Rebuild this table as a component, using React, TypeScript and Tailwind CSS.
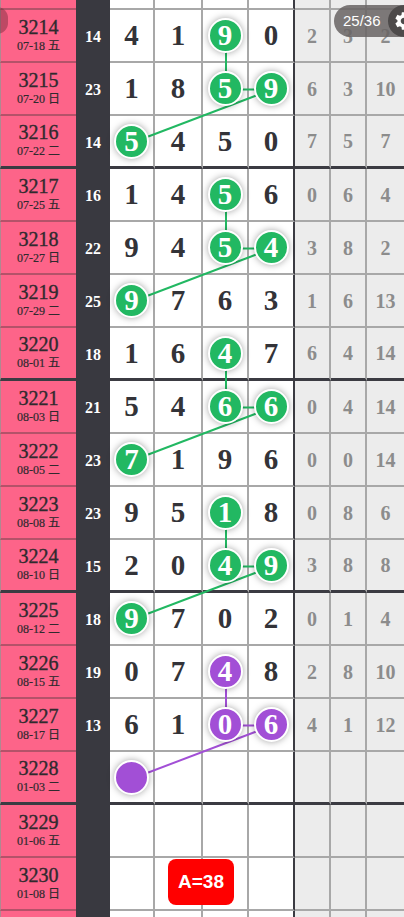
import * as React from "react"

// Lottery trend sheet — one row per draw, 53px tall, grid lines every row, dark rule every 4 rows.

type Row = {
  no: string
  date: string
  sum?: number
  digits: (number | null)[]
  balls: number[]
  tone?: "green" | "purple"
  miss: (number | null)[]
}

const rows: Row[] = [
  { no: "3213", date: "07-15 二", sum: 17, digits: [6, 3, 2, 1], balls: [], miss: [1, 2, 1] },
  { no: "3214", date: "07-18 五", sum: 14, digits: [4, 1, 9, 0], balls: [2], tone: "green", miss: [2, 3, 2] },
  { no: "3215", date: "07-20 日", sum: 23, digits: [1, 8, 5, 9], balls: [2, 3], tone: "green", miss: [6, 3, 10] },
  { no: "3216", date: "07-22 二", sum: 14, digits: [5, 4, 5, 0], balls: [0], tone: "green", miss: [7, 5, 7] },
  { no: "3217", date: "07-25 五", sum: 16, digits: [1, 4, 5, 6], balls: [2], tone: "green", miss: [0, 6, 4] },
  { no: "3218", date: "07-27 日", sum: 22, digits: [9, 4, 5, 4], balls: [2, 3], tone: "green", miss: [3, 8, 2] },
  { no: "3219", date: "07-29 二", sum: 25, digits: [9, 7, 6, 3], balls: [0], tone: "green", miss: [1, 6, 13] },
  { no: "3220", date: "08-01 五", sum: 18, digits: [1, 6, 4, 7], balls: [2], tone: "green", miss: [6, 4, 14] },
  { no: "3221", date: "08-03 日", sum: 21, digits: [5, 4, 6, 6], balls: [2, 3], tone: "green", miss: [0, 4, 14] },
  { no: "3222", date: "08-05 二", sum: 23, digits: [7, 1, 9, 6], balls: [0], tone: "green", miss: [0, 0, 14] },
  { no: "3223", date: "08-08 五", sum: 23, digits: [9, 5, 1, 8], balls: [2], tone: "green", miss: [0, 8, 6] },
  { no: "3224", date: "08-10 日", sum: 15, digits: [2, 0, 4, 9], balls: [2, 3], tone: "green", miss: [3, 8, 8] },
  { no: "3225", date: "08-12 二", sum: 18, digits: [9, 7, 0, 2], balls: [0], tone: "green", miss: [0, 1, 4] },
  { no: "3226", date: "08-15 五", sum: 19, digits: [0, 7, 4, 8], balls: [2], tone: "purple", miss: [2, 8, 10] },
  { no: "3227", date: "08-17 日", sum: 13, digits: [6, 1, 0, 6], balls: [2, 3], tone: "purple", miss: [4, 1, 12] },
  { no: "3228", date: "01-03 二", digits: [null, null, null, null], balls: [0], tone: "purple", miss: [null, null, null] },
  { no: "3229", date: "01-06 五", digits: [null, null, null, null], balls: [], miss: [null, null, null] },
  { no: "3230", date: "01-08 日", digits: [null, null, null, null], balls: [], miss: [null, null, null] },
  { no: "3231", date: "01-10 二", digits: [null, null, null, null], balls: [], miss: [null, null, null] },
]

const ROW_H = 53
const colX = [132.5, 179, 226, 272]

// [rowIndex, col] -> [rowIndex, col]
const links: { from: [number, number]; to: [number, number]; color: string }[] = []
for (const start of [1, 4, 7, 10, 13]) {
  const color = start === 13 ? "#a24fd6" : "#22b862"
  links.push({ from: [start, 2], to: [start + 1, 2], color })
  links.push({ from: [start + 1, 2], to: [start + 1, 3], color })
  links.push({ from: [start + 1, 3], to: [start + 2, 0], color })
}

const groupEnd = (no: string) => (Number(no) - 3212) % 4 === 0

function Ball({ value, tone }: { value: number | null; tone: "green" | "purple" }) {
  return (
    <div
      className={
        "relative z-10 flex h-[35px] w-[35px] items-center justify-center rounded-full border-2 border-white shadow-[0_0_7px_rgba(0,0,0,0.35)] " +
        (tone === "green" ? "bg-[#22b862]" : "bg-[#a24fd6]")
      }
    >
      {value !== null && (
        <span className="font-['Liberation_Serif',serif] text-[29px] font-bold leading-none text-white">{value}</span>
      )}
    </div>
  )
}

export default function App() {
  return (
    <div className="relative h-[917px] w-[404px] overflow-hidden bg-white">
      <div className="relative -mt-[43px]">
        {rows.map((r) => {
          const dark = groupEnd(r.no)
          const lineMain = dark ? "border-b-[3px] border-b-[#3b3b42]" : "border-b-2 border-b-[#a8a8a8]"
          return (
            <div
              key={r.no}
              className="grid h-[53px] grid-cols-[76px_34px_45px_48px_46px_46px_36px_36px_37px]"
            >
              {/* issue + date */}
              <div
                className={
                  "flex flex-col items-center justify-center border-l border-l-[#b08890] bg-[#fd6489] text-[#2f2a2e] " +
                  (dark ? "border-b-[3px] border-b-[#3b3b42]" : "border-b-2 border-b-[#b45269]")
                }
              >
                <span className="font-['Liberation_Serif',serif] text-[20px] leading-[21px] [-webkit-text-stroke:0.35px_#2f2a2e]">
                  {r.no}
                </span>
                <span className="font-['Liberation_Serif','Noto_Sans_CJK_SC',serif] text-[12px] leading-[17px] [-webkit-text-stroke:0.2px_#2f2a2e]">
                  {r.date}
                </span>
              </div>

              {/* sum */}
              <div className="flex items-center justify-center bg-[#393940]">
                <span className="font-['Liberation_Serif',serif] text-[16px] font-bold text-white">{r.sum ?? ""}</span>
              </div>

              {/* digits */}
              {r.digits.map((d, ci) => (
                <div
                  key={ci}
                  className={
                    "flex items-center justify-center bg-white " +
                    lineMain +
                    (ci === 3 ? " border-r-2 border-r-[#3b3b42]" : " border-r-2 border-r-[#a8a8a8]")
                  }
                >
                  {r.balls.includes(ci) && r.tone ? (
                    <Ball value={d} tone={r.tone} />
                  ) : (
                    <span className="font-['Liberation_Serif',serif] text-[29px] font-bold leading-none text-[#333338]">
                      {d ?? ""}
                    </span>
                  )}
                </div>
              ))}

              {/* missing counts */}
              {r.miss.map((m, ci) => (
                <div
                  key={ci}
                  className={
                    "flex items-center justify-center bg-[#ececec] " +
                    lineMain +
                    (ci < 2 ? " border-r-2 border-r-[#a8a8a8]" : "")
                  }
                >
                  <span className="font-['Liberation_Serif',serif] text-[20px] font-bold text-[#8c8c8c]">{m ?? ""}</span>
                </div>
              ))}
            </div>
          )
        })}

        {/* connecting lines between hit balls */}
        <svg className="pointer-events-none absolute inset-0 h-full w-full" width={404} height={rows.length * ROW_H}>
          {links.map((l, i) => (
            <line
              key={i}
              x1={colX[l.from[1]]}
              y1={l.from[0] * ROW_H + 26.5}
              x2={colX[l.to[1]]}
              y2={l.to[0] * ROW_H + 26.5}
              stroke={l.color}
              strokeWidth={2}
            />
          ))}
        </svg>
      </div>

      {/* floating controls */}
      <div className="absolute -left-[14px] top-[7px] h-[27px] w-[22px] rounded-full bg-[rgba(110,40,55,0.45)]" />
      <div className="absolute left-[334px] top-[5px] flex h-[32px] w-[80px] items-center rounded-full bg-[rgba(105,100,100,0.85)] pl-[9px]">
        <span className="font-['Liberation_Sans',sans-serif] text-[15px] text-white">25/36</span>
      </div>
      <div className="absolute left-[388px] top-[5px] flex h-[32px] w-[32px] items-center justify-center rounded-full bg-[#4d4a4a]">
        <svg width="22" height="22" viewBox="0 0 24 24" fill="white">
          <path d="M19.14 12.94c.04-.3.06-.61.06-.94 0-.32-.02-.64-.07-.94l2.03-1.58a.49.49 0 0 0 .12-.61l-1.92-3.320a.488.488 0 0 0-.59-.22l-2.39.96c-.5-.38-1.03-.7-1.62-.94l-.36-2.54a.484.484 0 0 0-.48-.41h-3.84c-.24 0-.43.17-.47.41l-.36 2.54c-.59.24-1.13.57-1.62.94l-2.39-.96c-.22-.08-.47 0-.59.22L2.74 8.87c-.12.21-.08.47.12.61l2.03 1.58c-.05.3-.09.63-.09.94s.02.64.07.94l-2.03 1.58a.49.49 0 0 0-.12.61l1.92 3.32c.12.22.37.29.59.22l2.39-.96c.5.38 1.03.7 1.62.94l.36 2.54c.05.24.24.41.48.41h3.84c.24 0 .44-.17.47-.41l.36-2.54c.59-.24 1.130-.56 1.62-.94l2.39.96c.22.08.47 0 .59-.22l1.92-3.32c.12-.22.07-.47-.12-.61l-2.01-1.58zM12 15.6c-1.98 0-3.6-1.62-3.6-3.6s1.62-3.6 3.6-3.6 3.6 1.62 3.6 3.6-1.62 3.6-3.6 3.6z" />
        </svg>
      </div>

      <div className="absolute left-[168px] top-[859px] flex h-[46px] w-[66px] items-center justify-center rounded-[8px] bg-[#ff0000]">
        <span className="font-['Liberation_Sans',sans-serif] text-[19px] font-bold text-white">A=38</span>
      </div>
    </div>
  )
}
